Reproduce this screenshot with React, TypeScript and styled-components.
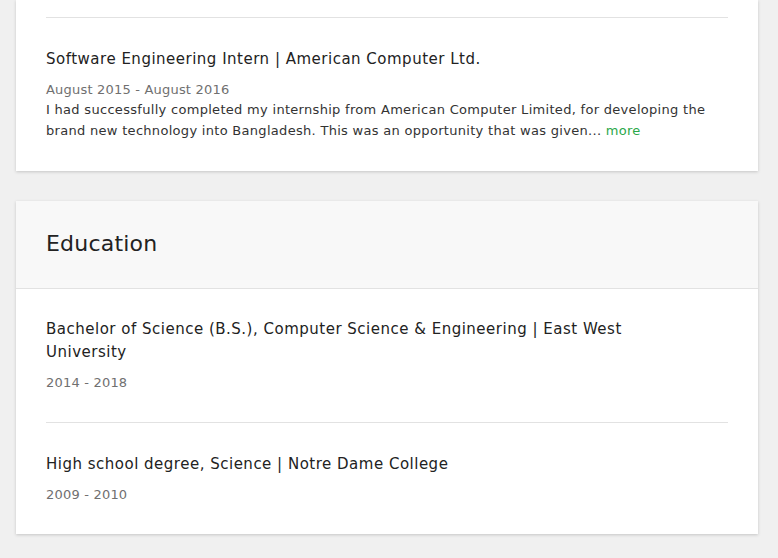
import React from "react";
import styled, { createGlobalStyle } from "styled-components";

const Global = createGlobalStyle`
  html, body { margin: 0; padding: 0; background: #f0f0f0; }
  body { font-family: "DejaVu Sans", "Liberation Sans", sans-serif; -webkit-font-smoothing: antialiased; }
  * { box-sizing: border-box; }
`;

const Page = styled.div`
  display: flex;
  flex-direction: column;
  gap: 30px;
  padding: 0 20px 24px 16px;
`;

const Card = styled.section<{ $cut?: boolean }>`
  background: #fff;
  box-shadow: 0 1px 3px rgba(0, 0, 0, 0.18);
  ${(p) => (p.$cut ? "padding: 17px 0 1px;" : "")}
`;

const Header = styled.header`
  background: #f8f8f8;
  border-bottom: 1px solid #e2e2e2;
  padding: 29px 30px 31px;
`;

const HeaderTitle = styled.h2`
  margin: 0;
  font-size: 22px;
  line-height: 27px;
  font-weight: 400;
  letter-spacing: 0.2px;
  color: #222;
`;

const List = styled.div`
  padding: 0 30px;
`;

const Item = styled.article<{ $divider?: boolean }>`
  padding: ${(p) => (p.$divider ? "30px" : "29px")} 0 29px;
  border-top: ${(p) => (p.$divider ? "1px solid #e2e2e2" : "none")};
`;

const Title = styled.h3`
  margin: 0 0 8px;
  max-width: 610px;
  font-size: 15px;
  line-height: 23px;
  font-weight: 400;
  letter-spacing: 0.5px;
  color: #222;
`;

const Dates = styled.div`
  font-size: 13px;
  line-height: 21px;
  letter-spacing: 0.2px;
  color: #707070;
`;

const Body = styled.p`
  margin: -1px 0 0;
  font-size: 13px;
  line-height: 21px;
  letter-spacing: 0.3px;
  color: #333;
`;

const More = styled.a`
  color: #2ba84a;
  text-decoration: none;
  cursor: pointer;
`;

export default function App() {
  return (
    <>
      <Global />
      <Page>
        <Card $cut>
          <List>
            <Item $divider>
              <Title>Software Engineering Intern | American Computer Ltd.</Title>
              <Dates>August 2015 - August 2016</Dates>
              <Body>
                I had successfully completed my internship from American Computer Limited, for developing the brand new
                technology into Bangladesh. This was an opportunity that was given... <More>more</More>
              </Body>
            </Item>
          </List>
        </Card>
        <Card>
          <Header>
            <HeaderTitle>Education</HeaderTitle>
          </Header>
          <List>
            <Item>
              <Title>Bachelor of Science (B.S.), Computer Science &amp; Engineering | East West University</Title>
              <Dates>2014 - 2018</Dates>
            </Item>
            <Item $divider>
              <Title>High school degree, Science | Notre Dame College</Title>
              <Dates>2009 - 2010</Dates>
            </Item>
          </List>
        </Card>
      </Page>
    </>
  );
}
